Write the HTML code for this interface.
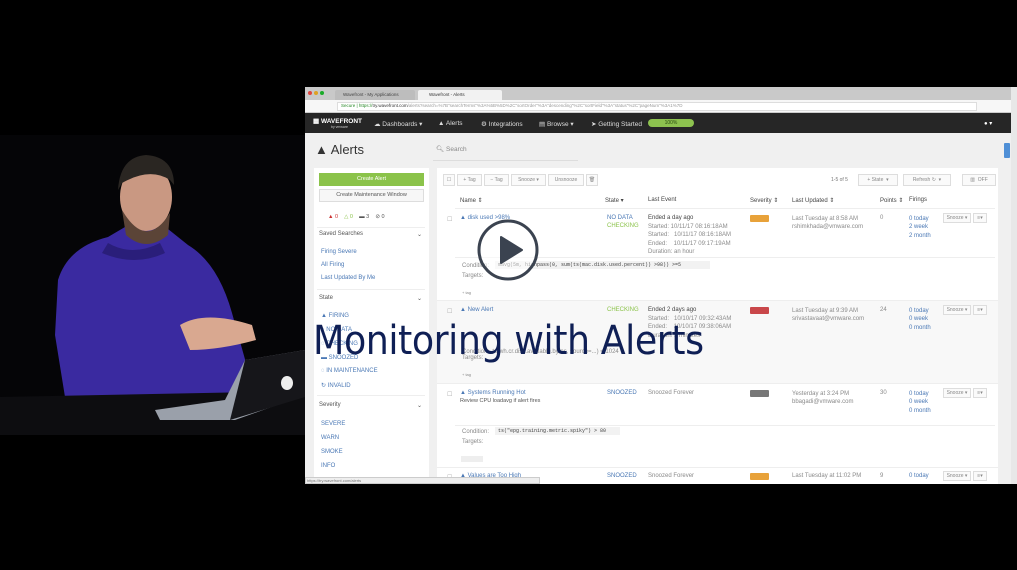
<!DOCTYPE html>
<html><head><meta charset="utf-8"><style>
*{margin:0;padding:0;box-sizing:border-box}
body{width:1017px;height:570px;background:#000;position:relative;overflow:hidden;font-family:"Liberation Sans",sans-serif}
.a{position:absolute}
.t{position:absolute;font-size:6px;color:#555;white-space:nowrap}
.lnk{color:#4a78b5}
.g{color:#8a8a8a}
.nav{color:#ddd;font-size:6.5px}
.btn{position:absolute;border:1px solid #ddd;background:#fafafa;font-size:5px;color:#888;text-align:center;line-height:10px}
.badge{position:absolute;width:19px;height:7px;border-radius:1px}
</style></head><body>
<!-- presenter video -->
<div class="a" style="left:0;top:135px;width:305px;height:300px;background:#050507;overflow:hidden">
  <svg width="305" height="300" viewBox="0 0 305 300">
    <path d="M58 145 Q68 112 108 102 L125 92 L168 94 L188 110 Q218 128 232 178 L248 235 L238 262 L65 262 L55 200 Z" fill="#3a2aa0"/>
    <path d="M108 108 Q132 122 160 108 L165 118 Q135 132 102 118Z" fill="#2a1e7a"/>
    <path d="M180 190 Q205 175 252 190 L256 205 Q220 215 190 215Z" fill="#d9a890"/>
    <ellipse cx="146" cy="62" rx="26" ry="34" fill="#c99882"/>
    <path d="M118 55 Q120 22 146 20 Q174 22 174 50 L170 45 Q150 32 122 48Z" fill="#2a2622"/>
    <path d="M122 75 Q146 116 170 78 L168 100 Q146 118 126 100Z" fill="#5b4437"/>
    <path d="M0 262 L305 256 L305 300 L0 300Z" fill="#0d0d10"/>
    <path d="M155 275 L225 265 L245 225 L305 215 L305 260 L235 285 L160 285Z" fill="#9aa0aa"/>
    <path d="M245 225 L305 215 L305 262 L230 285Z" fill="#16161a"/>
    <ellipse cx="287" cy="248" rx="6" ry="7" fill="#eee"/>
  </svg>
</div>
<!-- browser -->
<div class="a" style="left:305px;top:87px;width:712px;height:397px;background:#f0f0f0;overflow:hidden">
  <div class="a" style="left:0;top:0;width:712px;height:13px;background:#c9c9c9"></div>
  <div class="a" style="left:3px;top:4px;width:4px;height:4px;border-radius:50%;background:#e0443e"></div>
  <div class="a" style="left:9px;top:4px;width:4px;height:4px;border-radius:50%;background:#dea123"></div>
  <div class="a" style="left:15px;top:4px;width:4px;height:4px;border-radius:50%;background:#1aab29"></div>
  <div class="a" style="left:30px;top:3px;width:80px;height:10px;background:#bdbdbd;border-radius:2px 2px 0 0"></div>
  <div class="t" style="left:38px;top:5px;font-size:4.5px;color:#444">Wavefront - My Applications</div>
  <div class="a" style="left:113px;top:3px;width:84px;height:10px;background:#f2f2f2;border-radius:2px 2px 0 0"></div>
  <div class="t" style="left:124px;top:5px;font-size:4.5px;color:#333">Wavefront - Alerts</div>
  <div class="a" style="left:0;top:13px;width:712px;height:13px;background:#f7f7f7;border-bottom:1px solid #ccc"></div>
  <div class="a" style="left:32px;top:15px;width:640px;height:9px;background:#fff;border:1px solid #ddd"></div>
  <div class="t" style="left:36px;top:16px;font-size:4.5px;color:#2a8a2a">Secure | https://<span style="color:#333">try.wavefront.com</span><span style="color:#999">/alerts?search=%7B"searchTerms"%3A%5B%5D%2C"sortOrder"%3A"descending"%2C"sortField"%3A"status"%2C"pageNum"%3A1%7D</span></div>
  <div class="a" style="left:0;top:26px;width:712px;height:20px;background:#262626"></div>
  <div class="t" style="left:8px;top:30px;color:#fff;font-size:6.5px;font-weight:bold">▦ WAVEFRONT</div>
  <div class="t" style="left:26px;top:38px;color:#ccc;font-size:3.5px">by vmware</div>
  <div class="t nav" style="left:69px;top:33px">☁ Dashboards ▾</div>
  <div class="t nav" style="left:133px;top:33px">▲ Alerts</div>
  <div class="t nav" style="left:176px;top:33px">⚙ Integrations</div>
  <div class="t nav" style="left:234px;top:33px">▤ Browse ▾</div>
  <div class="t nav" style="left:286px;top:33px">➤ Getting Started</div>
  <div class="a" style="left:343px;top:32px;width:46px;height:8px;border-radius:4px;background:#8dc24f;font-size:5px;color:#2a4a10;text-align:center;line-height:8px">100%</div>
  <div class="t" style="left:679px;top:33px;color:#fff;font-size:6px">● ▾</div>
  <div class="t" style="left:10px;top:55px;font-size:13px;color:#333">▲ Alerts</div>
  <div class="t" style="left:131px;top:58px;font-size:6.5px;color:#888">🔍︎ Search</div>
  <div class="a" style="left:128px;top:73px;width:145px;height:1px;background:#ddd"></div>
  <div class="a" style="left:699px;top:56px;width:6px;height:15px;background:#4f8fd6;border-radius:1px"></div>
  <!-- left panel -->
  <div class="a" style="left:9px;top:81px;width:115px;height:316px;background:#fff"></div>
  <div class="a" style="left:14px;top:86px;width:105px;height:13px;background:#8bc34a;font-size:5.5px;color:#fff;text-align:center;line-height:13px">Create Alert</div>
  <div class="a" style="left:14px;top:102px;width:105px;height:13px;background:#f7f7f7;border:1px solid #ddd;font-size:5.5px;color:#555;text-align:center;line-height:11px">Create Maintenance Window</div>
  <div class="t" style="left:23px;top:127px;font-size:5.5px"><span style="color:#c33">▲ 0</span>&nbsp;&nbsp;&nbsp;&nbsp;<span style="color:#8bc34a">△ 0</span>&nbsp;&nbsp;&nbsp;&nbsp;<span>▬ 3</span>&nbsp;&nbsp;&nbsp;&nbsp;<span>⊘ 0</span></div>
  <div class="a" style="left:12px;top:140px;width:108px;height:1px;background:#eee"></div>
  <div class="t" style="left:14px;top:144px;font-size:6px;color:#555">Saved Searches</div><div class="t" style="left:112px;top:144px">⌄</div>
  <div class="t lnk" style="left:16px;top:162px">Firing Severe</div>
  <div class="t lnk" style="left:16px;top:175px">All Firing</div>
  <div class="t lnk" style="left:16px;top:188px">Last Updated By Me</div>
  <div class="a" style="left:12px;top:202px;width:108px;height:1px;background:#eee"></div>
  <div class="t" style="left:14px;top:208px;font-size:6px">State</div><div class="t" style="left:112px;top:208px">⌄</div>
  <div class="t lnk" style="left:16px;top:226px">▲ FIRING</div>
  <div class="t lnk" style="left:16px;top:240px">◌ NO DATA</div>
  <div class="t lnk" style="left:16px;top:254px">◌ CHECKING</div>
  <div class="t lnk" style="left:16px;top:268px">▬ SNOOZED</div>
  <div class="t lnk" style="left:16px;top:281px">◌ IN MAINTENANCE</div>
  <div class="t lnk" style="left:16px;top:295px">↻ INVALID</div>
  <div class="a" style="left:12px;top:308px;width:108px;height:1px;background:#eee"></div>
  <div class="t" style="left:14px;top:315px;font-size:6px">Severity</div><div class="t" style="left:112px;top:315px">⌄</div>
  <div class="t lnk" style="left:16px;top:334px">SEVERE</div>
  <div class="t lnk" style="left:16px;top:348px">WARN</div>
  <div class="t lnk" style="left:16px;top:362px">SMOKE</div>
  <div class="t lnk" style="left:16px;top:376px">INFO</div>
  <!-- main panel -->
  <div class="a" style="left:132px;top:81px;width:561px;height:316px;background:#fff"></div>
  <div class="btn" style="left:138px;top:87px;width:12px;height:12px">☐</div>
  <div class="btn" style="left:152px;top:87px;width:25px;height:12px">+ Tag</div>
  <div class="btn" style="left:179px;top:87px;width:25px;height:12px">− Tag</div>
  <div class="btn" style="left:206px;top:87px;width:35px;height:12px">Snooze ▾</div>
  <div class="btn" style="left:243px;top:87px;width:36px;height:12px">Unsnooze</div>
  <div class="btn" style="left:281px;top:87px;width:12px;height:12px">🗑︎</div>
  <div class="t" style="left:526px;top:90px;font-size:5px;color:#777">1-5 of 5</div>
  <div class="btn" style="left:553px;top:87px;width:40px;height:12px">+ State &nbsp;▾</div>
  <div class="btn" style="left:598px;top:87px;width:48px;height:12px">Refresh ↻ &nbsp;▾</div>
  <div class="btn" style="left:657px;top:87px;width:34px;height:12px">▥ &nbsp;OFF</div>
  <div class="t" style="left:155px;top:110px;font-size:6px;color:#444">Name ⇕</div>
  <div class="t" style="left:300px;top:110px;font-size:6px;color:#444">State ▾</div>
  <div class="t" style="left:343px;top:110px;font-size:6px;color:#444">Last Event</div>
  <div class="t" style="left:445px;top:110px;font-size:6px;color:#444">Severity ⇕</div>
  <div class="t" style="left:487px;top:110px;font-size:6px;color:#444">Last Updated ⇕</div>
  <div class="t" style="left:575px;top:110px;font-size:6px;color:#444">Points ⇕</div>
  <div class="t" style="left:604px;top:110px;font-size:6px;color:#444">Firings</div>
  <div class="a" style="left:150px;top:121px;width:540px;height:1px;background:#eee"></div>
  <!-- row1 -->
  <div class="t" style="left:142px;top:129px;color:#aaa">☐</div>
  <div class="t lnk" style="left:155px;top:128px;font-size:6px">▲ disk used &gt;98%</div>
  <div class="t lnk" style="left:302px;top:128px">NO DATA</div>
  <div class="t" style="left:302px;top:136px;color:#8bc34a">CHECKING</div>
  <div class="t" style="left:343px;top:128px;color:#444;font-size:6px">Ended a day ago</div>
  <div class="t g" style="left:343px;top:136px;line-height:8.3px">Started: 10/11/17 08:16:18AM<br>Started: &nbsp;&nbsp;10/11/17 08:16:18AM<br>Ended: &nbsp;&nbsp;&nbsp;10/11/17 09:17:19AM<br>Duration: an hour</div>
  <div class="badge" style="left:445px;top:128px;background:#e8a23a"></div>
  <div class="t g" style="left:487px;top:128px;line-height:8px">Last Tuesday at 8:58 AM<br>rshimkhada@vmware.com</div>
  <div class="t g" style="left:575px;top:128px">0</div>
  <div class="t lnk" style="left:604px;top:128px;line-height:8.3px">0 today<br>2 week<br>2 month</div>
  <div class="btn" style="left:638px;top:126px;width:28px;height:10px;line-height:8px">Snooze ▾</div>
  <div class="btn" style="left:668px;top:126px;width:14px;height:10px;line-height:8px">≡▾</div>
  <div class="a" style="left:150px;top:170px;width:540px;height:1px;background:#eee"></div>
  <div class="t g" style="left:157px;top:176px">Condition:</div>
  <div class="a" style="left:190px;top:174px;width:215px;height:8px;background:#f2f2f2"></div>
  <div class="t" style="left:193px;top:175px;font-family:'Liberation Mono',monospace;font-size:5px;color:#444">mavg(5m, highpass(0, sum(ts(mac.disk.used.percent)) &gt;98)) &gt;=5</div>
  <div class="t g" style="left:157px;top:186px">Targets:</div>
  <div class="t g" style="left:157px;top:203px;font-size:4px">+ tag</div>
  <!-- row2 -->
  <div class="a" style="left:132px;top:213px;width:561px;height:83px;background:#f8f8f8;border-top:1px solid #eee"></div>
  <div class="t" style="left:142px;top:221px;color:#aaa">☐</div>
  <div class="t lnk" style="left:155px;top:220px;font-size:6px">▲ New Alert</div>
  <div class="t" style="left:302px;top:220px;color:#8bc34a">CHECKING</div>
  <div class="t" style="left:343px;top:220px;color:#444;font-size:6px">Ended 2 days ago</div>
  <div class="t g" style="left:343px;top:228px;line-height:8.3px">Started: &nbsp;&nbsp;10/10/17 09:32:43AM<br>Ended: &nbsp;&nbsp;&nbsp;10/10/17 09:38:06AM<br>Duration: 5 minutes</div>
  <div class="badge" style="left:445px;top:220px;background:#c9474a"></div>
  <div class="t g" style="left:487px;top:220px;line-height:8px">Last Tuesday at 9:39 AM<br>srivastavaat@vmware.com</div>
  <div class="t g" style="left:575px;top:220px">24</div>
  <div class="t lnk" style="left:604px;top:220px;line-height:8.3px">0 today<br>0 week<br>0 month</div>
  <div class="btn" style="left:638px;top:218px;width:28px;height:10px;line-height:8px">Snooze ▾</div>
  <div class="btn" style="left:668px;top:218px;width:14px;height:10px;line-height:8px">≡▾</div>
  <div class="t g" style="left:157px;top:262px">Condition: &nbsp;ts(wh.cr.disk.available.bytes, source=...) &lt; 1024</div>
  <div class="t g" style="left:157px;top:268px">Targets:</div>
  <div class="t g" style="left:157px;top:285px;font-size:4px">+ tag</div>
  <!-- row3 -->
  <div class="a" style="left:132px;top:296px;width:561px;height:1px;background:#eee"></div>
  <div class="t" style="left:142px;top:304px;color:#aaa">☐</div>
  <div class="t lnk" style="left:155px;top:303px;font-size:6px">▲ Systems Running Hot</div>
  <div class="t" style="left:155px;top:311px;color:#555;font-size:5.5px">Review CPU loadavg if alert fires</div>
  <div class="t lnk" style="left:302px;top:303px">SNOOZED</div>
  <div class="t g" style="left:343px;top:303px">Snoozed Forever</div>
  <div class="badge" style="left:445px;top:303px;background:#777"></div>
  <div class="t g" style="left:487px;top:303px;line-height:8px">Yesterday at 3:24 PM<br>bbagadi@vmware.com</div>
  <div class="t g" style="left:575px;top:303px">30</div>
  <div class="t lnk" style="left:604px;top:303px;line-height:8.3px">0 today<br>0 week<br>0 month</div>
  <div class="btn" style="left:638px;top:301px;width:28px;height:10px;line-height:8px">Snooze ▾</div>
  <div class="btn" style="left:668px;top:301px;width:14px;height:10px;line-height:8px">≡▾</div>
  <div class="a" style="left:150px;top:338px;width:540px;height:1px;background:#eee"></div>
  <div class="t g" style="left:157px;top:342px">Condition:</div>
  <div class="a" style="left:190px;top:340px;width:125px;height:8px;background:#f2f2f2"></div>
  <div class="t" style="left:193px;top:341px;font-family:'Liberation Mono',monospace;font-size:5px;color:#444">ts("epg.training.metric.spiky") &gt; 80</div>
  <div class="t g" style="left:157px;top:352px">Targets:</div>
  <div class="a" style="left:156px;top:369px;width:22px;height:6px;background:#eee"></div>
  <div class="a" style="left:132px;top:380px;width:561px;height:1px;background:#eee"></div>
  <div class="t" style="left:142px;top:387px;color:#aaa">☐</div>
  <div class="t lnk" style="left:155px;top:386px;font-size:6px">▲ Values are Too High</div>
  <div class="t lnk" style="left:302px;top:386px">SNOOZED</div>
  <div class="t g" style="left:343px;top:386px">Snoozed Forever</div>
  <div class="badge" style="left:445px;top:386px;background:#e8a23a"></div>
  <div class="t g" style="left:487px;top:386px">Last Tuesday at 11:02 PM</div>
  <div class="t g" style="left:575px;top:386px">9</div>
  <div class="t lnk" style="left:604px;top:386px">0 today</div>
  <div class="btn" style="left:638px;top:384px;width:28px;height:10px;line-height:8px">Snooze ▾</div>
  <div class="btn" style="left:668px;top:384px;width:14px;height:10px;line-height:8px">≡▾</div>
  <div class="a" style="left:0;top:390px;width:235px;height:7px;background:#eee;border:1px solid #ccc"></div>
  <div class="t" style="left:2px;top:391px;font-size:4px;color:#777">https://try.wavefront.com/alerts</div>
  <div class="a" style="left:706px;top:0;width:6px;height:397px;background:#e8e8e8"></div>
</div>
<!-- play button -->
<svg class="a" style="left:476px;top:218px" width="64" height="64" viewBox="0 0 64 64">
  <circle cx="32" cy="32" r="29" fill="rgba(255,255,255,0.55)" stroke="#3b4350" stroke-width="3"/>
  <path d="M25 19 L46 32 L25 45 Z" fill="#3b4350" stroke="#3b4350" stroke-width="2" stroke-linejoin="round"/>
</svg>
<div class="a" style="left:313px;top:318px;font-size:40px;color:#0f1f55;white-space:nowrap;letter-spacing:-0.5px;font-family:'DejaVu Sans','Liberation Sans',sans-serif;transform:scaleX(0.91);transform-origin:left">Monitoring with Alerts</div>
</body></html>
